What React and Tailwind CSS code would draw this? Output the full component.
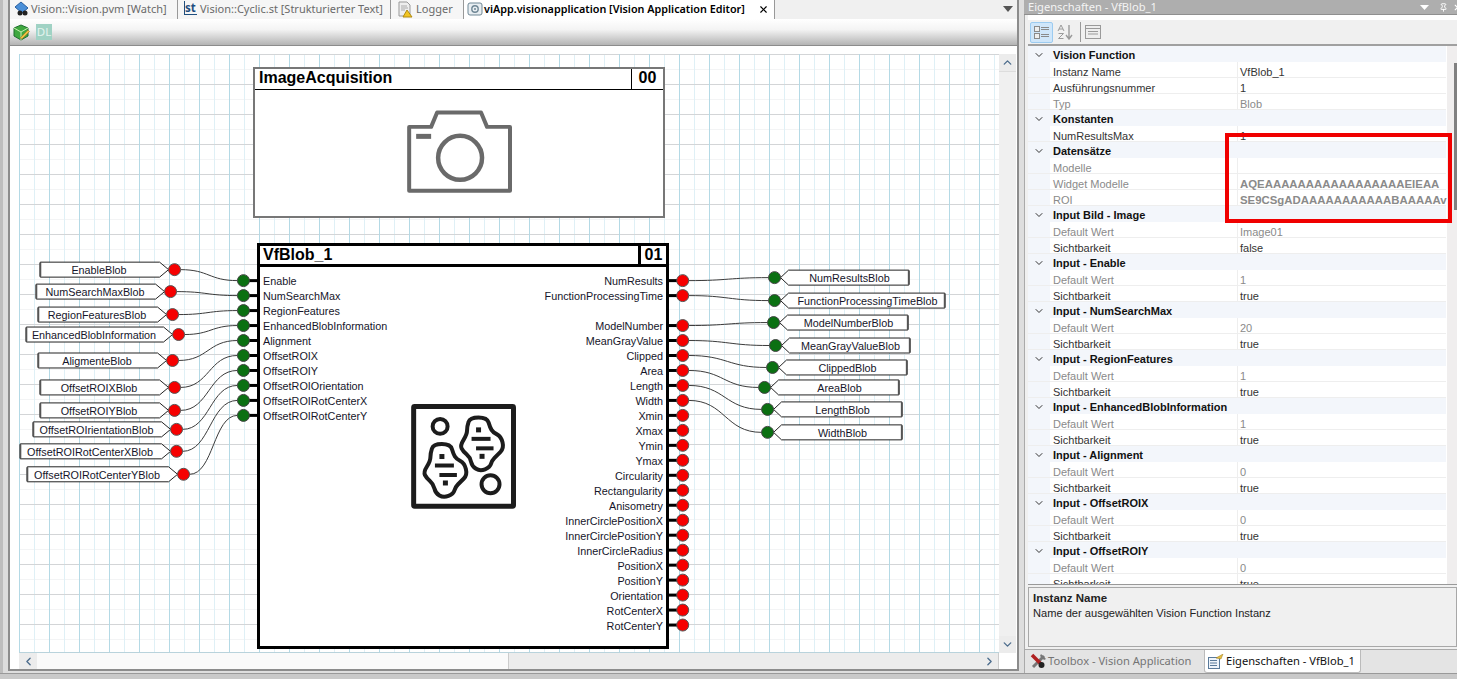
import { ChevronDown, ChevronLeft, ChevronRight, ChevronUp, Pin, X } from "lucide-react"

const uiFont = "font-['Noto_Sans',sans-serif]"
const gridFont = "font-['Liberation_Sans',Arial,sans-serif]"
const ORIGIN_X = 19
const ORIGIN_Y = 54

const inputs = [
  "Enable",
  "NumSearchMax",
  "RegionFeatures",
  "EnhancedBlobInformation",
  "Alignment",
  "OffsetROIX",
  "OffsetROIY",
  "OffsetROIOrientation",
  "OffsetROIRotCenterX",
  "OffsetROIRotCenterY",
]

const outputs = [
  "NumResults",
  "FunctionProcessingTime",
  null,
  "ModelNumber",
  "MeanGrayValue",
  "Clipped",
  "Area",
  "Length",
  "Width",
  "Xmin",
  "Xmax",
  "Ymin",
  "Ymax",
  "Circularity",
  "Rectangularity",
  "Anisometry",
  "InnerCirclePositionX",
  "InnerCirclePositionY",
  "InnerCircleRadius",
  "PositionX",
  "PositionY",
  "Orientation",
  "RotCenterX",
  "RotCenterY",
]

// left: x of the tag's edge, cx/cy: the red pin, to: row of the input it goes to
const leftTags = [
  { text: "EnableBlob", left: 39, cx: 174, cy: 270, to: 0 },
  { text: "NumSearchMaxBlob", left: 35, cx: 170, cy: 292, to: 1 },
  { text: "RegionFeaturesBlob", left: 37, cx: 172, cy: 315, to: 2 },
  { text: "EnhancedBlobInformation", left: 25, cx: 178, cy: 335, to: 3 },
  { text: "AligmenteBlob", left: 37, cx: 172, cy: 361, to: 4 },
  { text: "OffsetROIXBlob", left: 39, cx: 174, cy: 388, to: 5 },
  { text: "OffsetROIYBlob", left: 39, cx: 174, cy: 411, to: 6 },
  { text: "OffsetROIrientationBlob", left: 32, cx: 176, cy: 430, to: 7 },
  { text: "OffsetROIRotCenterXBlob", left: 19, cx: 176, cy: 452, to: 8 },
  { text: "OffsetROIRotCenterYBlob", left: 26, cx: 183, cy: 475, to: 9 },
]

const rightTags = [
  { text: "NumResultsBlob", right: 910, cx: 775, cy: 278, from: 0 },
  { text: "FunctionProcessingTimeBlob", right: 946, cx: 775, cy: 301, from: 1 },
  { text: "ModelNumberBlob", right: 909, cx: 774, cy: 323, from: 3 },
  { text: "MeanGrayValueBlob", right: 911, cx: 776, cy: 346, from: 4 },
  { text: "ClippedBlob", right: 908, cx: 773, cy: 368, from: 5 },
  { text: "AreaBlob", right: 900, cx: 765, cy: 388, from: 6 },
  { text: "LengthBlob", right: 903, cx: 768, cy: 410, from: 7 },
  { text: "WidthBlob", right: 903, cx: 768, cy: 433, from: 8 },
]

const rowY = (i) => 281 + i * 15

const inputGroup = (title, value, visible = "true") => ({
  title,
  rows: [
    { name: "Default Wert", value, muted: true },
    { name: "Sichtbarkeit", value: visible },
  ],
})

const propertyGroups = [
  {
    title: "Vision Function",
    rows: [
      { name: "Instanz Name", value: "VfBlob_1" },
      { name: "Ausführungsnummer", value: "1" },
      { name: "Typ", value: "Blob", muted: true },
    ],
  },
  { title: "Konstanten", rows: [{ name: "NumResultsMax", value: "1" }] },
  {
    title: "Datensätze",
    rows: [
      { name: "Modelle", value: "", muted: true },
      { name: "Widget Modelle", value: "AQEAAAAAAAAAAAAAAAAAEIEAA", muted: true, bold: true },
      { name: "ROI", value: "SE9CSgADAAAAAAAAAAABAAAAAv", muted: true, bold: true },
    ],
  },
  inputGroup("Input Bild - Image", "Image01", "false"),
  inputGroup("Input - Enable", "1"),
  inputGroup("Input - NumSearchMax", "20"),
  inputGroup("Input - RegionFeatures", "1"),
  inputGroup("Input - EnhancedBlobInformation", "1"),
  inputGroup("Input - Alignment", "0"),
  inputGroup("Input - OffsetROIX", "0"),
  inputGroup("Input - OffsetROIY", "0"),
]

// rounds a closed polygon into a soft outline
const smoothPath = (pts) => {
  const mid = (a, b) => [(a[0] + b[0]) / 2, (a[1] + b[1]) / 2]
  const start = mid(pts[pts.length - 1], pts[0])
  let d = `M${start[0]} ${start[1]}`
  pts.forEach((p, i) => {
    const m = mid(p, pts[(i + 1) % pts.length])
    d += ` Q${p[0]} ${p[1]} ${m[0]} ${m[1]}`
  })
  return d + " Z"
}

const blobOutline = smoothPath([
  [470, 418],
  [487, 418],
  [490, 428],
  [493, 433],
  [501, 437],
  [504, 449],
  [497, 456],
  [492, 461],
  [490, 468],
  [480, 472],
  [472, 467],
  [470, 458],
  [463, 452],
  [460, 446],
  [467, 435],
  [467, 427],
])

function Blob({ dx = 0, dy = 0 }) {
  return (
    <g transform={`translate(${dx} ${dy})`} fill="#1c1c1c">
      <path d={blobOutline} fill="none" stroke="#1c1c1c" strokeWidth="4" />
      <rect x="476" y="428" width="5" height="5" />
      <rect x="471.5" y="437.5" width="19" height="4" />
      <rect x="476" y="447" width="17.5" height="4" />
      <rect x="479.5" y="454.5" width="5" height="5" />
    </g>
  )
}

function DiagramDrawing() {
  return (
    <svg
      className="absolute inset-0 h-full w-full"
      viewBox={`${ORIGIN_X} ${ORIGIN_Y} 980 599`}
    >
      {/* camera */}
      <g fill="none" stroke="#6a6a6a" strokeWidth="4" strokeLinejoin="round">
        <path d="M409 127 H431 L437 112.5 H481 L487 127 H510 V191 H409 Z" />
        <circle cx="460" cy="158" r="22" strokeWidth="4.5" />
      </g>
      <rect x="416" y="134" width="15" height="5" fill="#6a6a6a" />

      {/* blob icon */}
      <rect x="413.5" y="407" width="100" height="100" rx="1" fill="none" stroke="#1c1c1c" strokeWidth="5" />
      <circle cx="440" cy="427" r="7.5" fill="none" stroke="#1c1c1c" strokeWidth="4" />
      <circle cx="490.5" cy="485" r="9" fill="none" stroke="#1c1c1c" strokeWidth="4" />
      <Blob />
      <Blob dx={-36.7} dy={26.7} />

      {/* wires */}
      <g fill="none" stroke="#3a3a3a" strokeWidth="1">
        {leftTags.map((t) => {
          const x1 = t.cx + 6
          const y2 = rowY(t.to)
          const m = (x1 + 237) / 2
          return <path key={t.text} d={`M${x1} ${t.cy} C${m} ${t.cy} ${m} ${y2} 237 ${y2}`} />
        })}
        {rightTags.map((t) => {
          const y1 = rowY(t.from)
          const x2 = t.cx - 6
          const m = (689 + x2) / 2
          return <path key={t.text} d={`M689 ${y1} C${m} ${y1} ${m} ${t.cy} ${x2} ${t.cy}`} />
        })}
      </g>

      {/* tag outlines */}
      <g fill="#fff" stroke="#222" strokeWidth="1">
        {leftTags.map((t) => (
          <g key={t.text}>
            <path d={`M${t.left + 0.5} ${t.cy - 7.5} H${t.cx - 15} L${t.cx - 6} ${t.cy} L${t.cx - 15} ${t.cy + 7.5} H${t.left + 0.5} Z`} />
            <path d={`M${t.left + 0.5} ${t.cy - 7} V${t.cy + 7}`} stroke="#555" strokeWidth="2" />
          </g>
        ))}
        {rightTags.map((t) => (
          <g key={t.text}>
            <path d={`M${t.right - 0.5} ${t.cy - 7.5} H${t.cx + 14} L${t.cx + 6} ${t.cy} L${t.cx + 14} ${t.cy + 7.5} H${t.right - 0.5} Z`} />
            <path d={`M${t.right - 0.5} ${t.cy - 7} V${t.cy + 7}`} stroke="#555" strokeWidth="2" />
          </g>
        ))}
      </g>

      {/* pins */}
      <g stroke="#000" strokeWidth="3">
        {inputs.map((name, i) => (
          <path key={name} d={`M248 ${rowY(i)} H258`} />
        ))}
        {outputs.map((name, i) => name && <path key={name} d={`M668 ${rowY(i)} H678`} />)}
      </g>
      <g fill="#0b7012" stroke="#444" strokeWidth="1">
        {inputs.map((name, i) => (
          <circle key={name} cx="243" cy={rowY(i)} r="6" />
        ))}
        {rightTags.map((t) => (
          <circle key={t.text} cx={t.cx} cy={t.cy} r="6" />
        ))}
      </g>
      <g fill="#f60000" stroke="#555" strokeWidth="1">
        {outputs.map((name, i) => name && <circle key={name} cx="683" cy={rowY(i)} r="6" />)}
        {leftTags.map((t) => (
          <circle key={t.text} cx={t.cx} cy={t.cy} r="6" />
        ))}
      </g>
    </svg>
  )
}

function TagText({ text, left, right, cy }) {
  return (
    <div
      className="absolute flex h-[15px] items-center justify-center whitespace-nowrap text-[10.8px] text-[#15152a]"
      style={{ left: left - ORIGIN_X, width: right - left, top: cy - 7.5 - ORIGIN_Y }}
    >
      {text}
    </div>
  )
}

function Diagram() {
  return (
    <div className={`relative h-[599px] w-[980px] overflow-hidden border-b border-[#b9d3dc] bg-white bg-[linear-gradient(to_right,#b4d9e5_1px,transparent_1px),linear-gradient(to_bottom,#d3d5d7_1px,transparent_1px),linear-gradient(to_right,#dff0f6_1px,transparent_1px),linear-gradient(to_bottom,#f3f4f5_1px,transparent_1px)] bg-[size:30px_30px,30px_30px,15px_15px,15px_15px] ${gridFont}`}>
      <div className="absolute left-[234px] top-[13px] h-[151px] w-[412px] border-2 border-[#777] bg-white">
        <div className="flex h-[21px] border-b border-black">
          <div className="flex-1 pl-1 text-[16px] font-bold leading-[17px] text-black">ImageAcquisition</div>
          <div className="w-[32px] border-l border-black text-center text-[16px] font-bold leading-[17px] text-black">00</div>
        </div>
      </div>

      <div className="absolute left-[238px] top-[189px] h-[406px] w-[412px] border-[3px] border-black bg-white">
        <div className="flex h-[21px] border-b-[3px] border-black">
          <div className="flex-1 pl-[3px] text-[16px] font-bold leading-[17px] text-black">VfBlob_1</div>
          <div className="w-[28px] border-l-[3px] border-black text-center text-[16px] font-bold leading-[17px] text-black">01</div>
        </div>
        <div className="flex justify-between px-[3px] pt-[7px] text-[10.8px] leading-[15px] text-[#15152a]">
          <div className="flex flex-col">
            {inputs.map((name) => (
              <div key={name} className="h-[15px] whitespace-nowrap">{name}</div>
            ))}
          </div>
          <div className="flex flex-col items-end">
            {outputs.map((name, i) => (
              <div key={i} className="h-[15px] whitespace-nowrap">{name}</div>
            ))}
          </div>
        </div>
      </div>

      <DiagramDrawing />

      {leftTags.map((t) => (
        <TagText key={t.text} text={t.text} left={t.left} right={t.cx - 15} cy={t.cy} />
      ))}
      {rightTags.map((t) => (
        <TagText key={t.text} text={t.text} left={t.cx + 14} right={t.right} cy={t.cy} />
      ))}
    </div>
  )
}

function EditorTabs() {
  return (
    <div className={`flex h-[19px] bg-[#f0f0f0] text-[11px] leading-[18px] text-[#6a6a6a] ${uiFont}`}>
      <div className="flex w-[167px] bg-[#f6f6f6] pl-[4px]">
        <svg width="16" height="17" viewBox="0 0 16 17" className="mr-[1px] mt-[1px] shrink-0">
          <path d="M7 1 L14 7 L8 12 L1 6 Z" fill="#4a8fd8" stroke="#2a5f9f" />
          <circle cx="6" cy="12" r="2.5" fill="#222" />
          <circle cx="11" cy="12" r="2.5" fill="#222" />
        </svg>
        <span className="whitespace-nowrap">Vision::Vision.pvm [Watch]</span>
      </div>
      <div className="flex w-[213px] border-l border-[#999] bg-[#f6f6f6] pl-[6px]">
        <span className="mr-[3px] mt-[1px] flex h-[14px] w-[13px] items-center border-b border-l border-[#1f4f7f] text-[11.5px] font-bold text-[#1f4f7f]">st</span>
        <span className="whitespace-nowrap">Vision::Cyclic.st [Strukturierter Text]</span>
      </div>
      <div className="flex w-[73px] border-l border-[#999] bg-[#f6f6f6] pl-[6px]">
        <svg width="16" height="17" viewBox="0 0 16 17" className="mr-[3px] mt-[1px] shrink-0">
          <path d="M2 1 H10 L13 4 V15 H2 Z" fill="#eee" stroke="#999" />
          <path d="M4 5 H10 M4 7 H11 M4 9 H8" stroke="#aaa" />
          <path d="M10 9 L15 16 H6 Z" fill="#f2c522" stroke="#b08a10" />
        </svg>
        <span>Logger</span>
      </div>
      <div className="flex w-[312px] border-l border-r border-[#999] bg-white pl-[3px] text-[10.8px] font-semibold text-black">
        <svg width="16" height="17" viewBox="0 0 16 17" className="mr-[1px] mt-[1px] shrink-0">
          <rect x="1" y="2" width="14" height="12" rx="2" fill="#e8eef2" stroke="#6f8795" />
          <circle cx="8" cy="8" r="3.2" fill="none" stroke="#6f8795" strokeWidth="1.4" />
          <circle cx="8" cy="8" r="1" fill="#6f8795" />
        </svg>
        <span className="w-[274px] whitespace-nowrap">viApp.visionapplication [Vision Application Editor]</span>
        <X size={11} strokeWidth={2.5} className="mt-[4px] text-black" />
      </div>
      <div className="flex flex-1 justify-end pr-[4px] pt-[6px]">
        <svg width="10" height="6" viewBox="0 0 10 6">
          <path d="M0 0 H10 L5 6 Z" fill="#555" />
        </svg>
      </div>
    </div>
  )
}

function EditorToolbar() {
  return (
    <div className="flex h-[27px] items-center gap-[6px] border-b border-[#8c8c8c] bg-[linear-gradient(to_bottom,#fff_0%,#f4f4f4_40%,#b4b4b4_100%)] pl-[3px]">
      <svg width="17" height="17" viewBox="0 0 17 17" className="shrink-0">
        <path d="M8 1 L15 4 V12 L8 16 L1 12 V4 Z" fill="#3fa83f" stroke="#1f6f2f" />
        <path d="M1 4 L8 8 L15 4 M8 8 V16" fill="none" stroke="#c8f0b0" />
        <path d="M7 14 L15 6 L16.5 7.5 L9 15 Z" fill="#f2c040" stroke="#8a6a20" strokeWidth="0.5" />
      </svg>
      <div className={`h-[16px] w-[16px] bg-[#a0d2c4] text-center text-[11.5px] leading-[16px] text-[#e4f4ef] ${uiFont}`}>DL</div>
    </div>
  )
}

function ScrollButton({ children, className = "" }) {
  return (
    <div className={`flex items-center justify-center bg-[#ececec] text-[#4d6d8d] ${className}`}>
      {children}
    </div>
  )
}

function EditorCanvas() {
  return (
    <div className="flex flex-1 flex-col bg-white pl-[9px] pt-[8px]">
      <div className="flex h-[599px]">
        <Diagram />
        <div className="flex w-[17px] flex-col bg-[#f0f0f0]">
          <ScrollButton className="h-[18px] border-b border-[#ddd]">
            <ChevronUp size={13} strokeWidth={2.5} />
          </ScrollButton>
          <div className="flex-1" />
          <ScrollButton className="h-[17px]">
            <ChevronDown size={13} strokeWidth={2.5} />
          </ScrollButton>
        </div>
      </div>
      <div className="flex h-[16px] w-[980px]">
        <ScrollButton className="w-[18px]">
          <ChevronLeft size={13} strokeWidth={2.5} />
        </ScrollButton>
        <div className="w-[472px] border-r border-[#ccc] bg-[#fafafa]" />
        <div className="flex-1 bg-[#ececec]" />
        <ScrollButton className="w-[18px] border-r border-[#ccc]">
          <ChevronRight size={13} strokeWidth={2.5} />
        </ScrollButton>
      </div>
    </div>
  )
}

function PropertyRow({ name, value, muted, bold }) {
  const color = muted ? "text-[#8a8a8a]" : "text-[#333]"
  return (
    <div className={`flex h-[16px] border-b border-[#eeeeee] leading-[21px] ${color}`}>
      <div className="w-[22px] shrink-0 bg-[#f3f6fb]" />
      <div className="w-[187px] shrink-0 overflow-x-clip whitespace-nowrap pl-[3px]">{name}</div>
      <div className={`flex-1 overflow-x-clip whitespace-nowrap border-l border-[#eeeeee] pl-[2px] ${bold ? "text-[11.4px] font-bold" : ""}`}>
        {value}
      </div>
    </div>
  )
}

function PropertyGrid() {
  return (
    <div className={`flex h-[538px] overflow-hidden bg-white text-[11px] ${gridFont}`}>
      <div className="w-[418px] shrink-0">
        {propertyGroups.map((group) => (
          <div key={group.title}>
            <div className="flex h-[16px] items-center bg-[#f3f6fb] pt-[1px] font-bold leading-[16px] text-[#111]">
              <div className="flex w-[25px] shrink-0 justify-center pr-[4px]">
                <ChevronDown size={12} strokeWidth={2} className="text-[#333]" />
              </div>
              {group.title}
            </div>
            {group.rows.map((row) => (
              <PropertyRow key={row.name} {...row} />
            ))}
          </div>
        ))}
      </div>
      <div className="ml-[1px] flex flex-1 justify-end bg-[#f0eeee]">
        <div className="mt-[17px] h-[147px] w-[3px] bg-[#808080]" />
      </div>
    </div>
  )
}

function PropertyPanel() {
  return (
    <div className={`flex w-[433px] flex-col ${uiFont}`}>
      <div className="flex h-[15px] items-center border-b border-[#8f8f8f] bg-[#aeaeae] pl-[4px] text-[11.15px] text-[#f4f4f4]">
        <span className="flex-1">Eigenschaften - VfBlob_1</span>
        <svg width="9" height="5" viewBox="0 0 9 5" className="mr-[10px]">
          <path d="M0 0 H9 L4.5 5 Z" fill="#fff" />
        </svg>
        <Pin size={9} strokeWidth={2.5} className="mr-[5px] text-white" />
        <X size={9} strokeWidth={3} className="-mr-[5px] text-white" />
      </div>
      <div className="flex flex-1 flex-col border-l border-[#aaa] bg-[#f0f0f0] pl-[3px]">
        <div className="h-[5px] bg-white" />
        <div className="flex h-[26px] items-center gap-[1px] border-b-2 border-[#a0a0a0] bg-[#f0f0f0] pl-[2px]">
          <div className="flex h-[21px] w-[23px] items-center justify-center rounded-[2px] border border-[#9ccbf0] bg-[#cfe6fa]">
            <svg width="16" height="15" viewBox="0 0 16 15" fill="none" stroke="#8a8a8a">
              <rect x="0.5" y="1.5" width="5" height="5" fill="#eee" />
              <rect x="0.5" y="8.5" width="5" height="5" fill="#eee" />
              <path d="M7 2.5 H15 M7 4.5 H15 M7 9.5 H15 M7 11.5 H15" />
            </svg>
          </div>
          <div className="flex h-[21px] w-[22px] items-center justify-center">
            <svg width="17" height="16" viewBox="0 0 17 16" fill="none" stroke="#9a9a9a">
              <path d="M1 7 L4 1 L7 7 M2 5 H6 M1.5 9.5 H6.5 L1.5 14.5 H6.5" />
              <path d="M12 1 V14 M9 11 L12 15 L15 11" strokeWidth="1.4" />
            </svg>
          </div>
          <div className="mx-[3px] h-[20px] w-[1px] bg-[#999]" />
          <svg width="16" height="14" viewBox="0 0 16 14" fill="#eee" stroke="#9a9a9a">
            <rect x="0.5" y="0.5" width="15" height="13" />
            <path d="M0.5 3.5 H15.5 M3 6.5 H13 M3 9 H13" fill="none" />
          </svg>
        </div>
        <PropertyGrid />
        <div className="h-[3px] border-t border-[#999]" />
        <div className={`h-[60px] border border-[#a8a8a8] bg-[#f0f0f0] pl-[4px] pt-[3px] text-[11.1px] leading-[15px] text-[#222] ${gridFont}`}>
          <div className="text-[11.5px] font-bold">Instanz Name</div>
          <div>Name der ausgewählten Vision Function Instanz</div>
        </div>
      </div>
      <div className="flex h-[24px] border-l border-t border-[#aaa] bg-[#e4e4e4] text-[11.15px]">
        <div className="flex w-[179px] items-center pl-[5px] text-[#747474]">
          <svg width="17" height="17" viewBox="0 0 17 17" className="mr-[1px] shrink-0">
            <path d="M14 3 L3 14" stroke="#777" strokeWidth="3" />
            <path d="M11 1 L16 6 L14 7 L10 3 Z" fill="#777" />
            <path d="M2 2 L11 11" stroke="#b02020" strokeWidth="3.5" />
            <circle cx="11.5" cy="12" r="3" fill="#222" />
          </svg>
          <span className="whitespace-nowrap">Toolbox - Vision Application</span>
        </div>
        <div className="flex w-[157px] items-center rounded-b-[3px] border-x border-b border-[#bbb] bg-white pl-[3px] text-[#111]">
          <svg width="16" height="15" viewBox="0 0 16 15" className="mr-[2px] shrink-0">
            <rect x="0.5" y="3.5" width="11" height="11" fill="#eef4fb" stroke="#5a7a9a" />
            <path d="M2 6.5 H9 M2 9 H9 M2 11.5 H9" stroke="#5a7a9a" />
            <path d="M8 4 L15 0 L13 5 Z" fill="#e8c040" stroke="#9a7a20" strokeWidth="0.5" />
          </svg>
          <span className="whitespace-nowrap">Eigenschaften - VfBlob_1</span>
        </div>
      </div>
    </div>
  )
}

export default function App() {
  return (
    <div className="relative flex h-[679px] w-[1457px] flex-col overflow-hidden bg-[#dedede]">
      <div className="flex h-[673px]">
        <div className="w-[3px] bg-[#bdbdbd]" />
        <div className="w-[5px] bg-[#dcdcdc]" />
        <div className="flex h-[671px] w-[1011px] flex-col border-l-2 border-r-2 border-b-2 border-[#8c8c8c]">
          <EditorTabs />
          <EditorToolbar />
          <EditorCanvas />
        </div>
        <div className="w-[5px]" />
        <PropertyPanel />
      </div>
      <div className="flex-1 border-t border-[#999] bg-[#c9c9c9]" />

      {/* red marking over the property grid */}
      <div className="absolute left-[1225px] top-[133px] h-[90px] w-[227px] border-4 border-[#f00000]" />
    </div>
  )
}
